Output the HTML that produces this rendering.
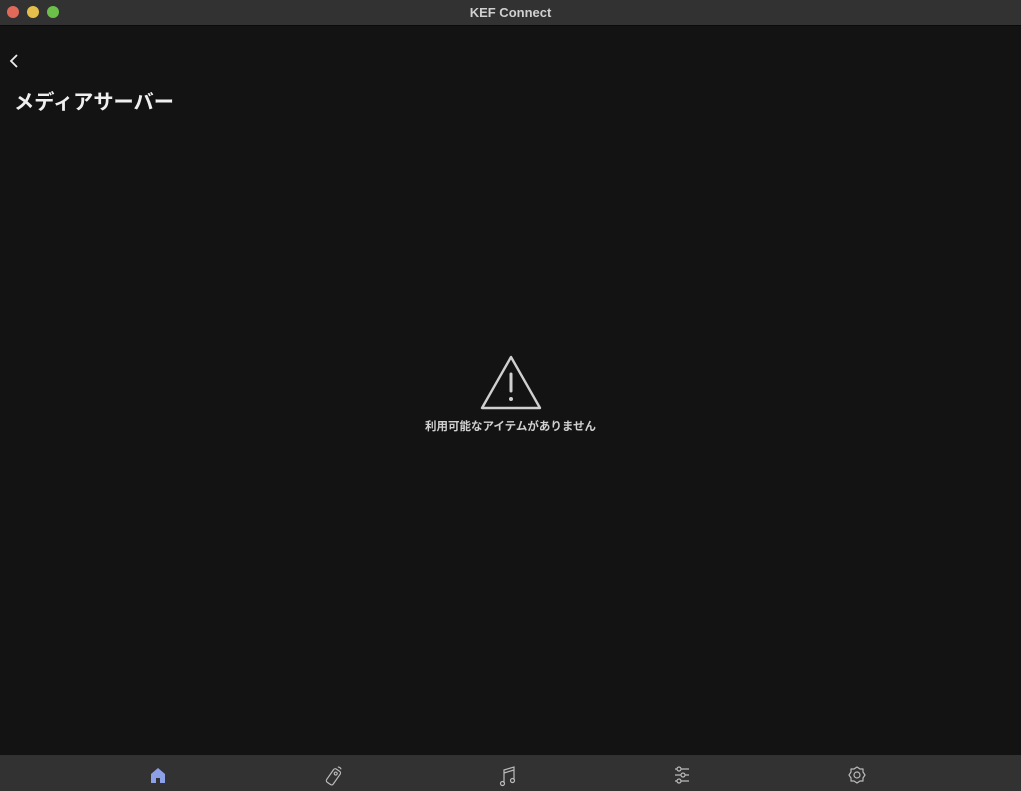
<!DOCTYPE html>
<html><head><meta charset="utf-8"><style>
html,body{margin:0;padding:0;width:1021px;height:791px;overflow:hidden;background:#131313;font-family:"Liberation Sans","Noto Sans CJK JP",sans-serif;}
.tb{position:absolute;left:0;top:0;width:1021px;height:25px;background:#323232;border-bottom:1px solid #0a0a0a;}
.tb .t{position:absolute;left:0;right:0;top:5px;text-align:center;color:#d0d0d0;font-size:13px;font-weight:bold;}
.d{position:absolute;top:6px;width:12px;height:12px;border-radius:50%;}
.title{position:absolute;left:14px;top:86px;color:#f0f0f0;font-size:20.2px;font-weight:bold;}
.msg{position:absolute;left:0;width:1021px;top:418px;text-align:center;color:#d0d0d0;font-size:11.5px;font-weight:bold;}
.bb{position:absolute;left:0;top:755px;width:1021px;height:36px;background:#323232;}
svg{position:absolute;}
</style></head><body>
<div class="tb"><div class="d" style="left:7px;background:#e0695a"></div><div class="d" style="left:27px;background:#e5bf4b"></div><div class="d" style="left:47px;background:#6cc04a"></div><div class="t">KEF Connect</div></div>
<svg style="left:8px;top:53px" width="12" height="16"><path d="M9 2L3 8L9 14" stroke="#eee" stroke-width="1.8" fill="none"/></svg>
<div class="title">メディアサーバー</div>
<svg style="left:479px;top:354px" width="64" height="58"><path d="M32 3L3 54H61Z" stroke="#d0d0d0" stroke-width="2.4" fill="none" stroke-linejoin="round"/><path d="M32 20V37" stroke="#d0d0d0" stroke-width="3" stroke-linecap="round"/><circle cx="32" cy="45" r="2" fill="#d0d0d0"/></svg>
<div class="msg">利用可能なアイテムがありません</div>
<div class="bb"></div>
<svg style="left:149px;top:766px" width="18" height="18"><path d="M2 17V8L9 2L16 8V17H11V12H7V17Z" fill="#8d9fe6"/></svg>
<svg style="left:323px;top:765px" width="22" height="22"><g transform="rotate(35 11 11)" stroke="#bbb" stroke-width="1.2" fill="none"><rect x="7" y="4" width="8" height="16" rx="2"/><circle cx="11" cy="8" r="1.5"/><path d="M9 1.5Q11 0 13 1.5"/></g></svg>
<svg style="left:498px;top:765px" width="20" height="22"><path d="M6 18V5L16 2V15M6 8L16 5" stroke="#bbb" stroke-width="1.2" fill="none"/><circle cx="4.5" cy="18.5" r="2" stroke="#bbb" stroke-width="1.2" fill="none"/><circle cx="14.5" cy="15.5" r="2" stroke="#bbb" stroke-width="1.2" fill="none"/></svg>
<svg style="left:673px;top:765px" width="20" height="22"><g stroke="#bbb" stroke-width="1.2" fill="none"><path d="M2 4H16M2 10H16M2 16H16"/><circle cx="6" cy="4" r="2" fill="#323232"/><circle cx="10" cy="10" r="2" fill="#323232"/><circle cx="6" cy="16" r="2" fill="#323232"/></g></svg>
<svg style="left:847px;top:765px" width="20" height="20"><path d="M10 2L13 4H16V7L18 10L16 13V16H13L10 18L7 16H4V13L2 10L4 7V4H7Z" stroke="#bbb" stroke-width="1.2" fill="none" stroke-linejoin="round"/><circle cx="10" cy="10" r="3" stroke="#bbb" stroke-width="1.2" fill="none"/></svg>
</body></html>
